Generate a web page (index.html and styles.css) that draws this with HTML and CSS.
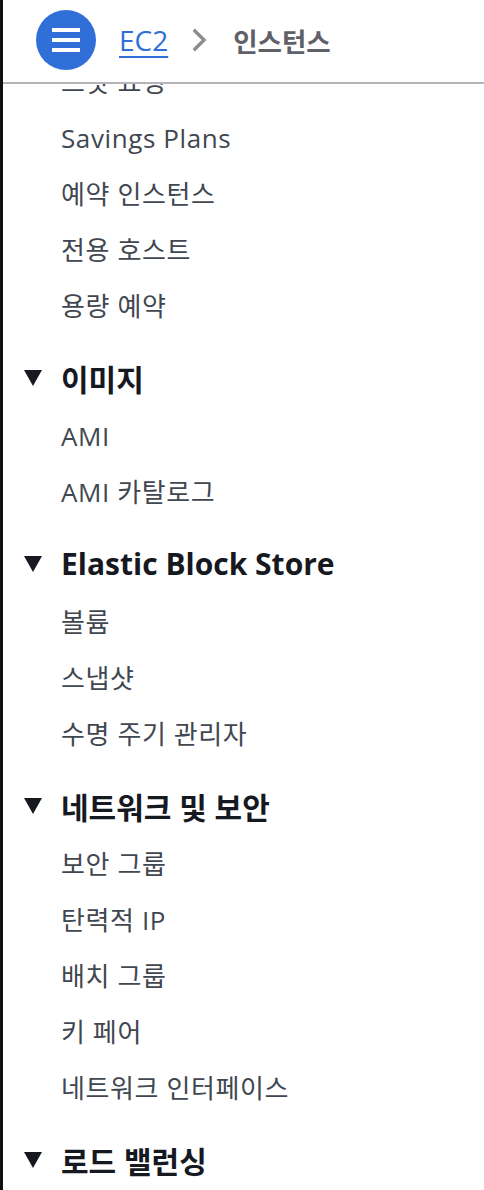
FILE: index.html
```html
<!DOCTYPE html>
<html lang="ko">
<head>
<meta charset="utf-8">
<link rel="stylesheet" href="styles.css">
</head>
<body>
<div class="frame">
  <header class="topbar">
    <button class="menu-btn" aria-label="menu">
      <span class="bar"></span><span class="bar"></span><span class="bar"></span>
    </button>
    <nav class="crumbs">
      <a class="crumb-link" href="#">EC2</a>
      <svg class="chev" width="16" height="24" viewBox="0 0 16 24"><path d="M3 3 L12 12 L3 21" fill="none" stroke="#8d8d91" stroke-width="3.4" stroke-linecap="square" stroke-linejoin="miter"/></svg>
      <span class="crumb-current">인스턴스</span>
    </nav>
  </header>
  <div class="nav">
    <ul class="items">
      <li class="item">스팟 요청</li>
      <li class="item">Savings Plans</li>
      <li class="item">예약 인스턴스</li>
      <li class="item">전용 호스트</li>
      <li class="item">용량 예약</li>
    </ul>
    <section class="group">
      <h3 class="group-title"><span class="tri"></span>이미지</h3>
      <ul class="items">
        <li class="item">AMI</li>
        <li class="item">AMI 카탈로그</li>
      </ul>
    </section>
    <section class="group">
      <h3 class="group-title"><span class="tri"></span>Elastic Block Store</h3>
      <ul class="items">
        <li class="item">볼륨</li>
        <li class="item">스냅샷</li>
        <li class="item">수명 주기 관리자</li>
      </ul>
    </section>
    <section class="group">
      <h3 class="group-title"><span class="tri"></span>네트워크 및 보안</h3>
      <ul class="items">
        <li class="item">보안 그룹</li>
        <li class="item">탄력적 IP</li>
        <li class="item">배치 그룹</li>
        <li class="item">키 페어</li>
        <li class="item">네트워크 인터페이스</li>
      </ul>
    </section>
    <section class="group">
      <h3 class="group-title"><span class="tri"></span>로드 밸런싱</h3>
    </section>
  </div>
</div>
</body>
</html>
```

FILE: styles.css
```css
html, body {
  margin: 0;
  padding: 0;
  background: #0f0f0f;
}
body {
  font-family: "Open Sans", "Noto Sans CJK KR", sans-serif;
  width: 484px;
  height: 1190px;
  overflow: hidden;
}
.frame {
  margin-left: 3px;
  background: #ffffff;
  height: 1190px;
  overflow: hidden;
}
.topbar {
  position: relative;
  z-index: 2;
  background: #ffffff;
  border-bottom: 2px solid #b4b4ba;
  display: flex;
  align-items: center;
  padding-left: 33px;
  box-sizing: border-box;
  height: 84px;
  padding-bottom: 2px;
}
.menu-btn {
  width: 60px;
  height: 60px;
  border-radius: 50%;
  border: none;
  background: #2f6fd7;
  display: flex;
  flex-direction: column;
  align-items: center;
  justify-content: center;
  gap: 6px;
  padding: 0;
  flex-shrink: 0;
}
.bar {
  display: block;
  width: 28px;
  height: 4px;
  background: #ffffff;
}
.crumbs {
  display: flex;
  align-items: center;
  margin-left: 23px;
}
.crumb-link {
  font-size: 28px;
  color: #2f6fd7;
  text-decoration: underline;
  text-decoration-thickness: 2px;
  text-underline-offset: 5px;
}
.chev {
  margin-left: 24px;
  margin-right: 25px;
}
.crumb-current {
  font-size: 26.5px;
  font-weight: 700;
  color: #5f6068;
}
.nav {
  margin-top: -30px;
  position: relative;
  z-index: 1;
}
.items {
  list-style: none;
  margin: 0;
  padding: 0;
}
.item {
  height: 56px;
  line-height: 56px;
  padding-left: 58px;
  font-size: 26px;
  letter-spacing: 0.6px;
  color: #414750;
}
.group {
  margin-top: 16px;
}
.group-title {
  margin: 0;
  height: 58px;
  padding-bottom: 3px;
  box-sizing: border-box;
  display: flex;
  align-items: center;
  font-size: 30px;
  font-weight: 700;
  color: #16191f;
  padding-left: 21px;
}
.tri {
  width: 0;
  height: 0;
  border-left: 9px solid transparent;
  border-right: 9px solid transparent;
  border-top: 16px solid #16191f;
  margin-right: 19px;
}
```
